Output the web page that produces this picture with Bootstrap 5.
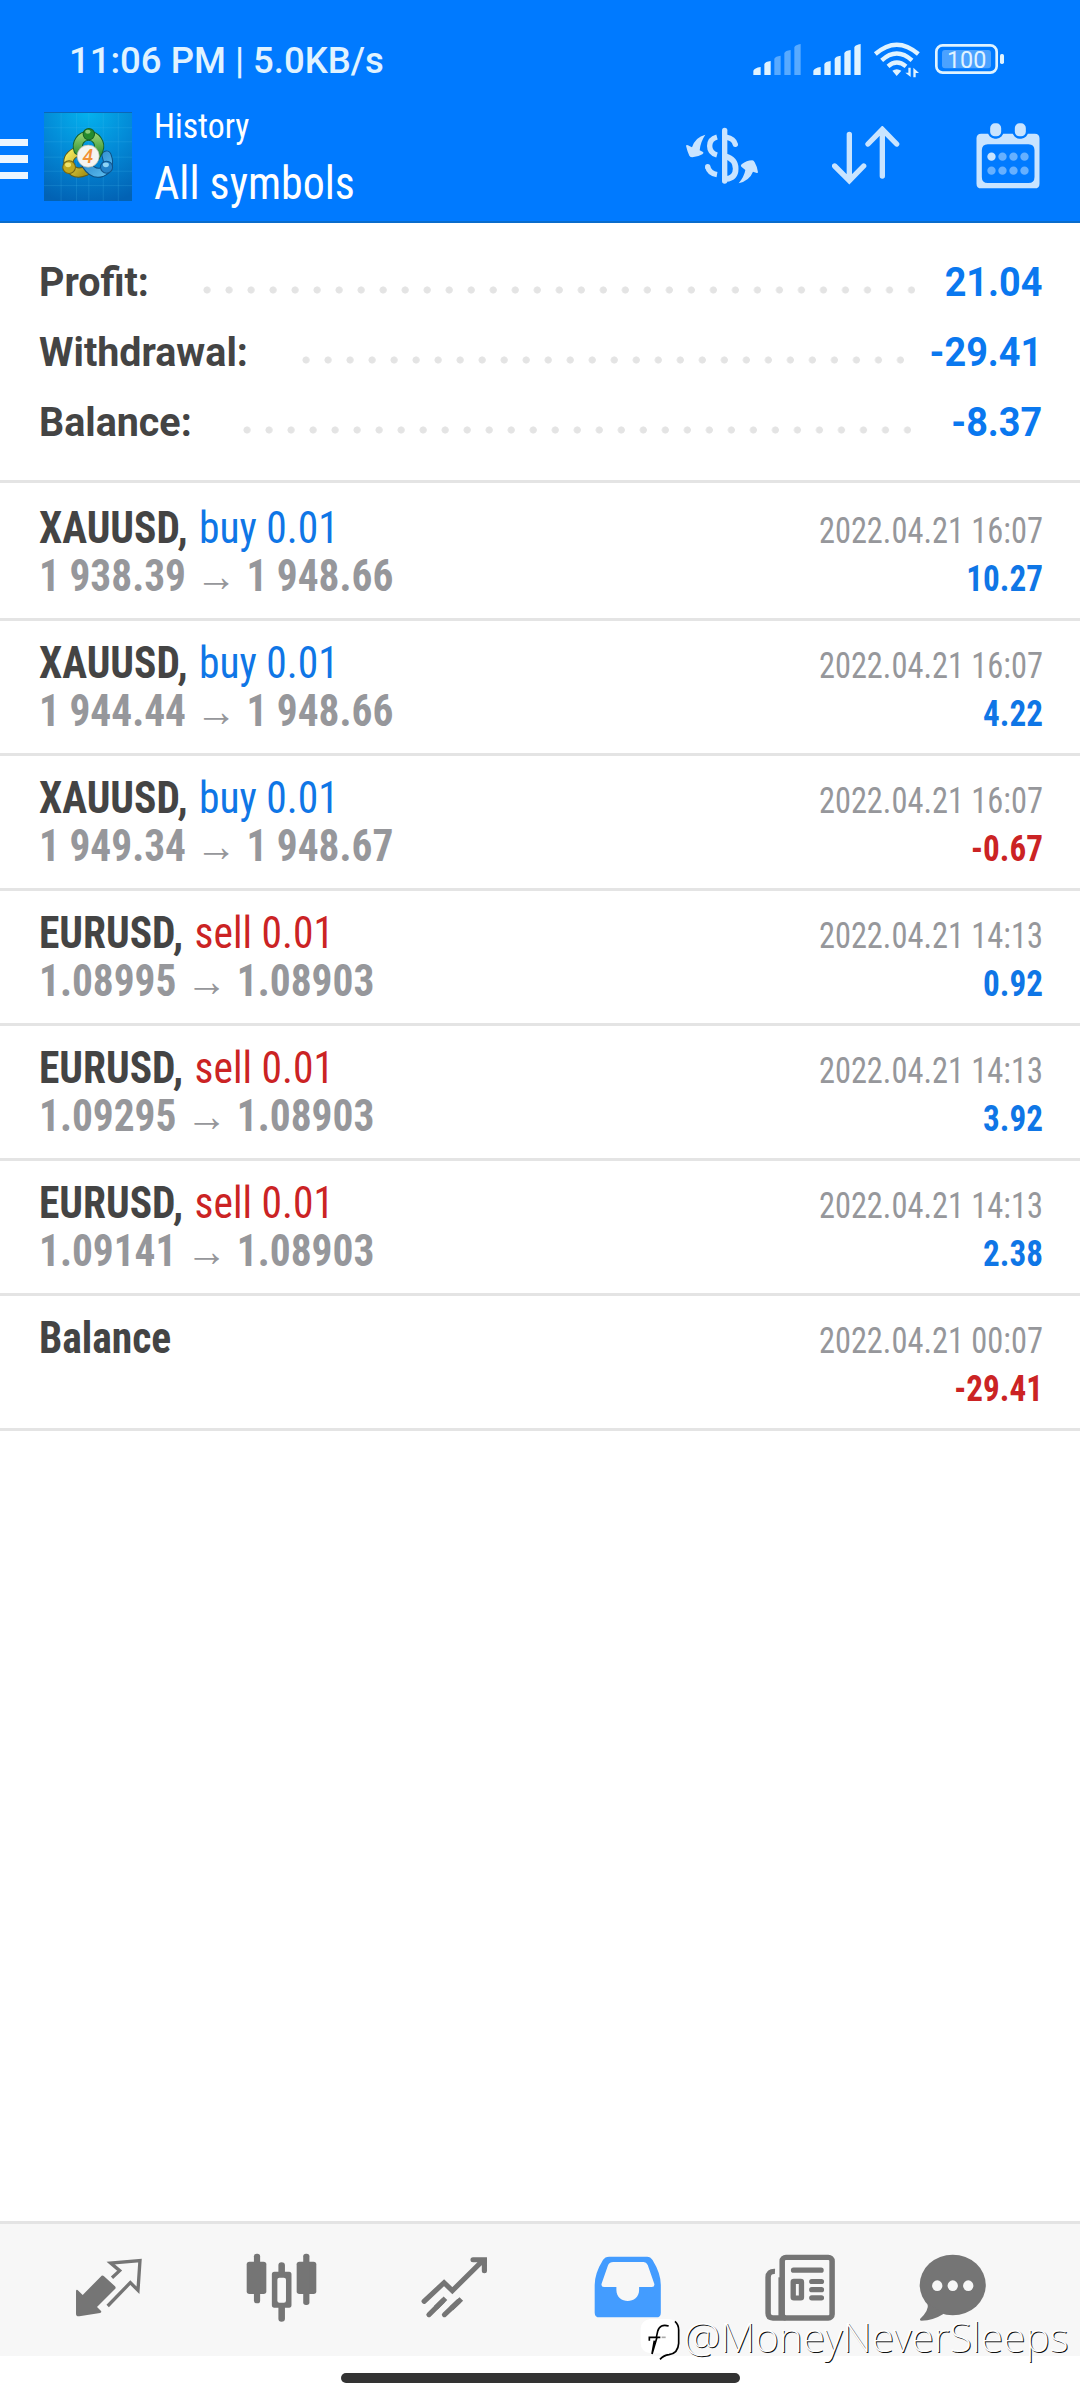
<!DOCTYPE html>
<html lang="en">
<head>
<meta charset="utf-8">
<meta name="viewport" content="width=device-width, initial-scale=1">
<title>History</title>
<link href="https://cdn.jsdelivr.net/npm/bootstrap@5.3.0/dist/css/bootstrap.min.css" rel="stylesheet">
<style>
  body { font-family: Roboto, "Liberation Sans", sans-serif; background: #fff; color: #444; }
  .screen { width: 1080px; height: 2400px; overflow: hidden; }
  svg { display: block; flex: none; }
  .condensed { font-stretch: 75%; white-space: nowrap; }

  /* header */
  .top-area { height: 223px; background: #007aff; border-bottom: 2px solid #0a6ccb; }
  .status-bar { height: 90px; padding: 41px 0 0 69px; }
  .clock { font-size: 36.5px; line-height: 40px; font-weight: 500; color: #e0f3ff; }
  .system-icons { margin: -1px 0 0 366px; }
  .app-bar { height: 131px; padding-right: 40px; }
  .burger { width: 28px; gap: 9px; margin-top: 7px; }
  .burger i { height: 7.5px; background: #edf6ff; }
  .logo { margin: 1px 22px 0 16px; }
  .titles { margin-top: 9px; color: #fff; gap: 6px; width: 531px; }
  .title-small { font-size: 35px; line-height: 40px; transform: scaleX(.965); transform-origin: left; }
  .title-large { font-size: 47px; line-height: 60px; transform: scaleX(.935); transform-origin: left; }
  .sort-icon { margin-right: 4px; }

  /* totals */
  .totals { height: 260px; padding: 25px 38px 0 39px; border-bottom: 3px solid #e4e4e4; }
  .total-row { height: 70px; font-size: 40px; line-height: 70px; font-weight: 700; }
  .total-name { transform: scaleX(.985); transform-origin: left; }
  .total-value { color: #0a78ef; transform: scaleX(.945); transform-origin: right; }
  .leader { height: 8px; margin-top: 13px; margin-left: auto; background: radial-gradient(circle at 4px 4px, #e4e4e4 3.2px, transparent 3.9px) 0 0 / 22.02px 8px repeat-x; }
  .lead-profit { width: 712px; margin-right: 24px; }
  .lead-withdrawal { width: 602px; margin-right: 19px; }
  .lead-balance { width: 668px; margin-right: 35px; }

  /* deals */
  .deals { padding-top: 3px; }
  .deal { height: 135px; padding: 18px 37.5px 0 39px; border-bottom: 3px solid #e4e4e4; line-height: 48px; }
  .deal-head { font-size: 44px; transform: scaleX(.943); transform-origin: left; }
  .deal-head b { margin-right: 2px; }
  .deal-price { font-size: 44px; font-weight: 700; color: #96979b; transform: scaleX(.94); transform-origin: left; }
  .deal-side { padding-top: 3px; font-size: 36px; }
  .deal-date { color: #96979b; transform: scaleX(.9); transform-origin: right; }
  .deal-sum { font-weight: 700; transform: scaleX(.92); transform-origin: right; }
  .tone-buy { color: #0f76e6; }
  .tone-sell { color: #cb2324; }

  /* bottom bar */
  .tabs { height: 135px; background: #f7f7f7; border-top: 3px solid #e4e4e4; padding: 0 0 5px 22px; }
  .tab-item { flex: 0 0 173px; }
  .tab-item:last-child { flex-basis: 131px; }
  .gesture { height: 44px; padding-top: 17px; }
  .gesture i { width: 399px; height: 10px; border-radius: 5px; background: #333; }
  .credit { left: 640px; top: 2314px; }
  .credit-name { font-family: "Noto Sans", sans-serif; font-weight: 200; font-size: 41px; line-height: 44px; color: #fff; text-shadow: 1px 1px 0 #111; margin-left: 2px; }
</style>
<script src="https://cdn.jsdelivr.net/npm/bootstrap@5.3.0/dist/js/bootstrap.bundle.min.js"></script>
</head>
<body>
<div class="screen position-relative d-flex flex-column">

  <header class="top-area flex-shrink-0">
    <div class="status-bar d-flex align-items-start">
      <div class="clock text-nowrap">11:06 PM | 5.0KB/s</div>
      <svg class="system-icons" width="256.7" height="40" viewBox="270 120 770 120" fill="#e0f3ff">
        <path d="M280 225v-13q3-8 22-11v24zM313 225v-33q3-7 19-9v42z"/>
        <path fill="#58aaff" d="M343 225v-49q3-7 19-9v58zM373 225v-66q3-7 19-9v75zM403 225v-83q3-8 19-10v93z"/>
        <path d="M460 225v-13q3-8 22-11v24zM493 225v-33q3-7 19-9v42zM524 225v-49q3-7 18-9v58zM553 225v-66q3-7 19-9v75zM583 225v-83q3-8 19-10v93z"/>
        <g fill="none" stroke="#e0f3ff" stroke-width="13"><path d="M646 162Q710 106 775 162M665 181Q710 140 756 181M684 199Q710 176 738 199"/></g>
        <path d="M697 212q13-9 27 0l-14 16zM745 203h7v28l-16-13h9zM760 232v-29l17 16h-10v13z"/>
        <rect x="829" y="136" width="181" height="82" rx="19" fill="none" stroke="#e0f3ff" stroke-width="8"/>
        <rect x="846" y="150" width="147" height="55" rx="9" fill="#4ba2ff"/>
        <rect x="1020" y="162" width="12" height="30" rx="5"/>
        <text x="920" y="205" text-anchor="middle" font-family="Roboto, sans-serif" font-size="70">100</text>
      </svg>
    </div>

    <div class="app-bar d-flex align-items-center">
      <div class="burger d-flex flex-column"><i></i><i></i><i></i></div>
      <svg class="logo" width="88" height="89" viewBox="43 38 263 266">
        <defs>
          <radialGradient id="sky" cx=".5" cy="0" r="1.05"><stop offset="0" stop-color="#04b2ee"/><stop offset=".5" stop-color="#0389d6"/><stop offset="1" stop-color="#0262b4"/></radialGradient>
          <linearGradient id="gr" x2="0" y2="1"><stop stop-color="#8fce6c"/><stop offset="1" stop-color="#24892c"/></linearGradient>
          <linearGradient id="ye" x2="1" y2="1"><stop stop-color="#f3e75c"/><stop offset="1" stop-color="#a99516"/></linearGradient>
          <linearGradient id="bl" x2="1" y2="1"><stop stop-color="#2684c9"/><stop offset="1" stop-color="#59b9ec"/></linearGradient>
        </defs>
        <rect x="43" y="38" width="263" height="266" fill="url(#sky)"/>
        <path d="M94 38v266M140 38v266M177 38v266M220 38v266M265 38v266M43 85h263M43 127h263M43 173h263M43 215h263M43 258h263" stroke="#4cc0ef" stroke-opacity=".3" stroke-width="2"/>
        <path d="M43 39.500h263" stroke="#0c67b5" stroke-width="3"/>
        <g fill="none" stroke-linecap="round">
          <path d="M138 158Q108 174 119 202Q135 228 168 214" stroke="#625d17" stroke-width="30"/>
          <path d="M138 158Q108 174 119 202Q135 228 168 214" stroke="url(#ye)" stroke-width="24"/>
          <path d="M170 196Q190 226 215 218Q244 206 230 168" stroke="#0c4f83" stroke-width="30"/>
          <path d="M170 196Q190 226 215 218Q244 206 230 168" stroke="url(#bl)" stroke-width="24"/>
          <path d="M146 152A32 32 0 1 1 206 152L196 172" stroke="#14602d" stroke-width="30"/>
          <path d="M146 152A32 32 0 1 1 206 152L196 172" stroke="url(#gr)" stroke-width="24"/>
        </g>
        <circle cx="177" cy="104" r="17" fill="#258b2e" stroke="#176025" stroke-width="3"/><ellipse cx="174" cy="97" rx="8" ry="6" fill="#8ccb79"/>
        <circle cx="118" cy="203" r="19" fill="#c0a91f" stroke="#706414" stroke-width="3"/><ellipse cx="115" cy="196" rx="9" ry="7" fill="#efe36d"/>
        <circle cx="230" cy="203" r="18" fill="#2382c9" stroke="#10548d" stroke-width="3"/><ellipse cx="228" cy="196" rx="9" ry="7" fill="#8fd3f5"/>
        <circle cx="175" cy="170" r="33" fill="#f5f4f1" stroke="#b9b7a7" stroke-width="2"/>
        <text x="174" y="190" text-anchor="middle" font-family="Roboto, sans-serif" font-style="italic" font-weight="500" font-size="58" fill="#f29136">4</text>
      </svg>
      <div class="titles condensed d-flex flex-column">
        <div class="title-small">History</div>
        <div class="title-large">All symbols</div>
      </div>
      <div class="d-flex align-items-center justify-content-between flex-grow-1">
        <svg width="74" height="56.700" viewBox="45 50 222 170" fill="#c9e4ff">
          <path d="M164 60V212" fill="none" stroke="#c9e4ff" stroke-width="16" stroke-linecap="round"/>
          <path d="M168 80Q192 84 196 102" fill="none" stroke="#c9e4ff" stroke-width="16" stroke-linecap="round"/>
          <path d="M166 138Q197 147 197 175Q197 203 168 206" fill="none" stroke="#c9e4ff" stroke-width="17"/>
          <path d="M141 80Q119 86 119 107Q119 128 141 134" fill="none" stroke="#c9e4ff" stroke-width="16"/>
          <path d="M113 170Q118 189 141 193" fill="none" stroke="#c9e4ff" stroke-width="16"/>
          <circle cx="113" cy="169" r="8"/>
          <path d="M48 106Q50 102 58 107L66 111Q76 80 106 73Q91 95 89 120L99 125Q103 128 97 132Q84 140 67 141Q61 141 58 136Q51 120 48 106z"/>
          <path d="M264 186Q263 190 258 187L249 184Q239 210 206 219Q223 198 226 179L215 170Q210 166 216 161Q229 151 247 150Q251 150 254 156Q263 172 264 186z"/>
        </svg>
        <svg class="sort-icon" width="68" height="58.700" viewBox="514 382 204 176" fill="none" stroke="#c9e4ff" stroke-width="16" stroke-linecap="round">
          <path d="M566 407V544M522 502L566 546L609 502M665 532V395M622 436L665 392L708 436"/>
        </svg>
        <svg width="64" height="66" viewBox="950 368 191 198" fill="#c9e4ff">
          <path fill-rule="evenodd" d="M965 400H1126Q1140 400 1140 414V550Q1140 564 1126 564H965Q951 564 951 550V414Q951 400 965 400zM985 432Q967 432 967 450V530Q967 548 985 548H1107Q1125 548 1125 530V450Q1125 432 1107 432z"/>
          <g stroke="#007aff" stroke-width="14" paint-order="stroke"><rect x="992" y="369" width="33" height="39" rx="14"/><rect x="1066" y="369" width="33" height="39" rx="14"/></g>
          <circle cx="996" cy="469" r="12.500"/>
          <g fill="#66b0ff"><circle cx="1029" cy="469" r="12.500"/><circle cx="1062" cy="469" r="12.500"/><circle cx="1095" cy="469" r="12.500"/><circle cx="996" cy="511" r="12.500"/><circle cx="1029" cy="511" r="12.500"/><circle cx="1062" cy="511" r="12.500"/><circle cx="1095" cy="511" r="12.500"/></g>
        </svg>
      </div>
    </div>
  </header>

  <section class="totals flex-shrink-0">
    <div class="total-row d-flex align-items-center"><span class="total-name">Profit:</span><span class="leader lead-profit"></span><span class="total-value">21.04</span></div>
    <div class="total-row d-flex align-items-center"><span class="total-name">Withdrawal:</span><span class="leader lead-withdrawal"></span><span class="total-value">-29.41</span></div>
    <div class="total-row d-flex align-items-center"><span class="total-name">Balance:</span><span class="leader lead-balance"></span><span class="total-value">-8.37</span></div>
  </section>

  <main class="deals condensed flex-grow-1">
    <div class="deal d-flex justify-content-between">
      <div><div class="deal-head"><b>XAUUSD,</b> <span class="tone-buy">buy 0.01</span></div><div class="deal-price">1 938.39 → 1 948.66</div></div>
      <div class="deal-side text-end"><div class="deal-date">2022.04.21 16:07</div><div class="deal-sum tone-buy">10.27</div></div>
    </div>
    <div class="deal d-flex justify-content-between">
      <div><div class="deal-head"><b>XAUUSD,</b> <span class="tone-buy">buy 0.01</span></div><div class="deal-price">1 944.44 → 1 948.66</div></div>
      <div class="deal-side text-end"><div class="deal-date">2022.04.21 16:07</div><div class="deal-sum tone-buy">4.22</div></div>
    </div>
    <div class="deal d-flex justify-content-between">
      <div><div class="deal-head"><b>XAUUSD,</b> <span class="tone-buy">buy 0.01</span></div><div class="deal-price">1 949.34 → 1 948.67</div></div>
      <div class="deal-side text-end"><div class="deal-date">2022.04.21 16:07</div><div class="deal-sum tone-sell">-0.67</div></div>
    </div>
    <div class="deal d-flex justify-content-between">
      <div><div class="deal-head"><b>EURUSD,</b> <span class="tone-sell">sell 0.01</span></div><div class="deal-price">1.08995 → 1.08903</div></div>
      <div class="deal-side text-end"><div class="deal-date">2022.04.21 14:13</div><div class="deal-sum tone-buy">0.92</div></div>
    </div>
    <div class="deal d-flex justify-content-between">
      <div><div class="deal-head"><b>EURUSD,</b> <span class="tone-sell">sell 0.01</span></div><div class="deal-price">1.09295 → 1.08903</div></div>
      <div class="deal-side text-end"><div class="deal-date">2022.04.21 14:13</div><div class="deal-sum tone-buy">3.92</div></div>
    </div>
    <div class="deal d-flex justify-content-between">
      <div><div class="deal-head"><b>EURUSD,</b> <span class="tone-sell">sell 0.01</span></div><div class="deal-price">1.09141 → 1.08903</div></div>
      <div class="deal-side text-end"><div class="deal-date">2022.04.21 14:13</div><div class="deal-sum tone-buy">2.38</div></div>
    </div>
    <div class="deal d-flex justify-content-between">
      <div><div class="deal-head"><b>Balance</b></div></div>
      <div class="deal-side text-end"><div class="deal-date">2022.04.21 00:07</div><div class="deal-sum tone-sell">-29.41</div></div>
    </div>
  </main>

  <nav class="tabs d-flex align-items-center flex-shrink-0">
    <div class="tab-item d-flex justify-content-center">
      <svg width="68" height="59.300" viewBox="44 56 204 178" fill="#757575">
        <path d="M47 154Q49 149 54 154L67 167L121 112Q126 106 131 111L164 141Q168 145 164 149L110 203L122 215Q125 219 119 221L57 231Q47 232 47 224z"/>
        <path d="M155 115L178 94L151 71L239 64L233 153L210 130L142 200" fill="none" stroke="#757575" stroke-width="10"/>
      </svg>
    </div>
    <div class="tab-item d-flex justify-content-center">
      <svg width="71" height="69.300" viewBox="713 130 206 208" preserveAspectRatio="none" fill="#757575">
        <rect x="715" y="156" width="57" height="97" rx="8"/><rect x="736" y="132" width="18" height="149" rx="8"/>
        <path fill-rule="evenodd" d="M795 186H838Q845 186 845 194V286Q845 294 838 294H795Q788 294 788 286V194Q788 186 795 186zM810 204Q804 204 804 210V273Q804 279 810 279H823Q829 279 829 273V210Q829 204 823 204z"/>
        <path d="M807 190V167Q807 158 816 158Q826 158 826 167V190zM807 290V327Q807 336 816 336Q826 336 826 327V290z"/>
        <rect x="860" y="156" width="57" height="97" rx="8"/><rect x="879" y="132" width="18" height="154" rx="8"/>
      </svg>
    </div>
    <div class="tab-item d-flex justify-content-center">
      <svg width="66.500" height="62.700" viewBox="1222 138 193 188" preserveAspectRatio="none" fill="none" stroke="#757575" stroke-width="15" stroke-linecap="round">
        <path d="M1231 274L1289 218L1313 242L1403 150M1373 149H1406V182"/>
        <path d="M1245 314L1285 273M1290 314L1331 274"/><path d="M1265 293L1293 265M1310 295L1339 267" stroke-linecap="butt"/>
      </svg>
    </div>
    <div class="tab-item d-flex justify-content-center">
      <svg width="67.500" height="62.700" viewBox="156 138 196 188" preserveAspectRatio="none" fill="#439cff">
        <path fill-rule="evenodd" d="M200 140H310Q320 140 326 150Q350 190 350 225V308Q350 322 337 322H172Q158 322 158 308V225Q158 190 182 150Q188 140 200 140zM212 156Q201 156 197 165L178 221Q176 231 185 231H221V240C221 284 287 284 287 240V231H324Q333 231 331 221L312 165Q308 156 300 156z"/>
      </svg>
    </div>
    <div class="tab-item d-flex justify-content-center">
      <svg width="70.200" height="67.300" viewBox="656 130 204 202" preserveAspectRatio="none" fill="none" stroke="#757575">
        <rect x="706" y="140" width="145" height="182" rx="11" stroke-width="16"/>
        <path d="M685 182Q665 181 665 200V308Q665 322 679 322H716" stroke-width="16"/>
        <path d="M698 200V320" stroke-width="6"/>
        <path d="M739 178.500H819M792 212.500H820M792 237H820M792 261.500H820" stroke-width="15.500" stroke-linecap="round"/>
        <rect x="738" y="212" width="24" height="50" rx="2" stroke-width="15.500"/>
      </svg>
    </div>
    <div class="tab-item d-flex justify-content-center">
      <svg width="67.500" height="67.300" viewBox="1101 130 196 202" preserveAspectRatio="none">
        <ellipse cx="1199" cy="223" rx="96" ry="91" fill="#757575"/>
        <path d="M1126 277Q1131 299 1104 325Q1102 330 1108 330Q1143 329 1173 309z" fill="#757575"/>
        <g fill="#f7f7f7"><ellipse cx="1154" cy="225" rx="15" ry="16"/><ellipse cx="1199" cy="225" rx="15" ry="16"/><ellipse cx="1244" cy="225" rx="15" ry="16"/></g>
      </svg>
    </div>
  </nav>
  <div class="gesture d-flex justify-content-center flex-shrink-0"><i></i></div>

  <div class="credit position-absolute d-flex align-items-start text-nowrap">
    <svg width="42" height="50" viewBox="33 20 126 150">
      <path d="M64 35H120Q148 38 147 66V105Q146 136 118 136Q102 138 94 150V138H64Q35 134 35 106V64Q37 38 64 35z" fill="#fff"/>
      <g fill="none" stroke="#000" stroke-width="5"><path d="M138 42Q149 52 149 68V108Q147 138 120 142Q104 144 93 156M119 56Q93 48 86 72L82 90M61 100V90H82M94 90H84L69 140M76 100L69 140"/><path d="M98 90H110" stroke="#aaa"/></g>
    </svg>
    <span class="credit-name">@MoneyNeverSleeps</span>
  </div>
</div>
</body>
</html>
